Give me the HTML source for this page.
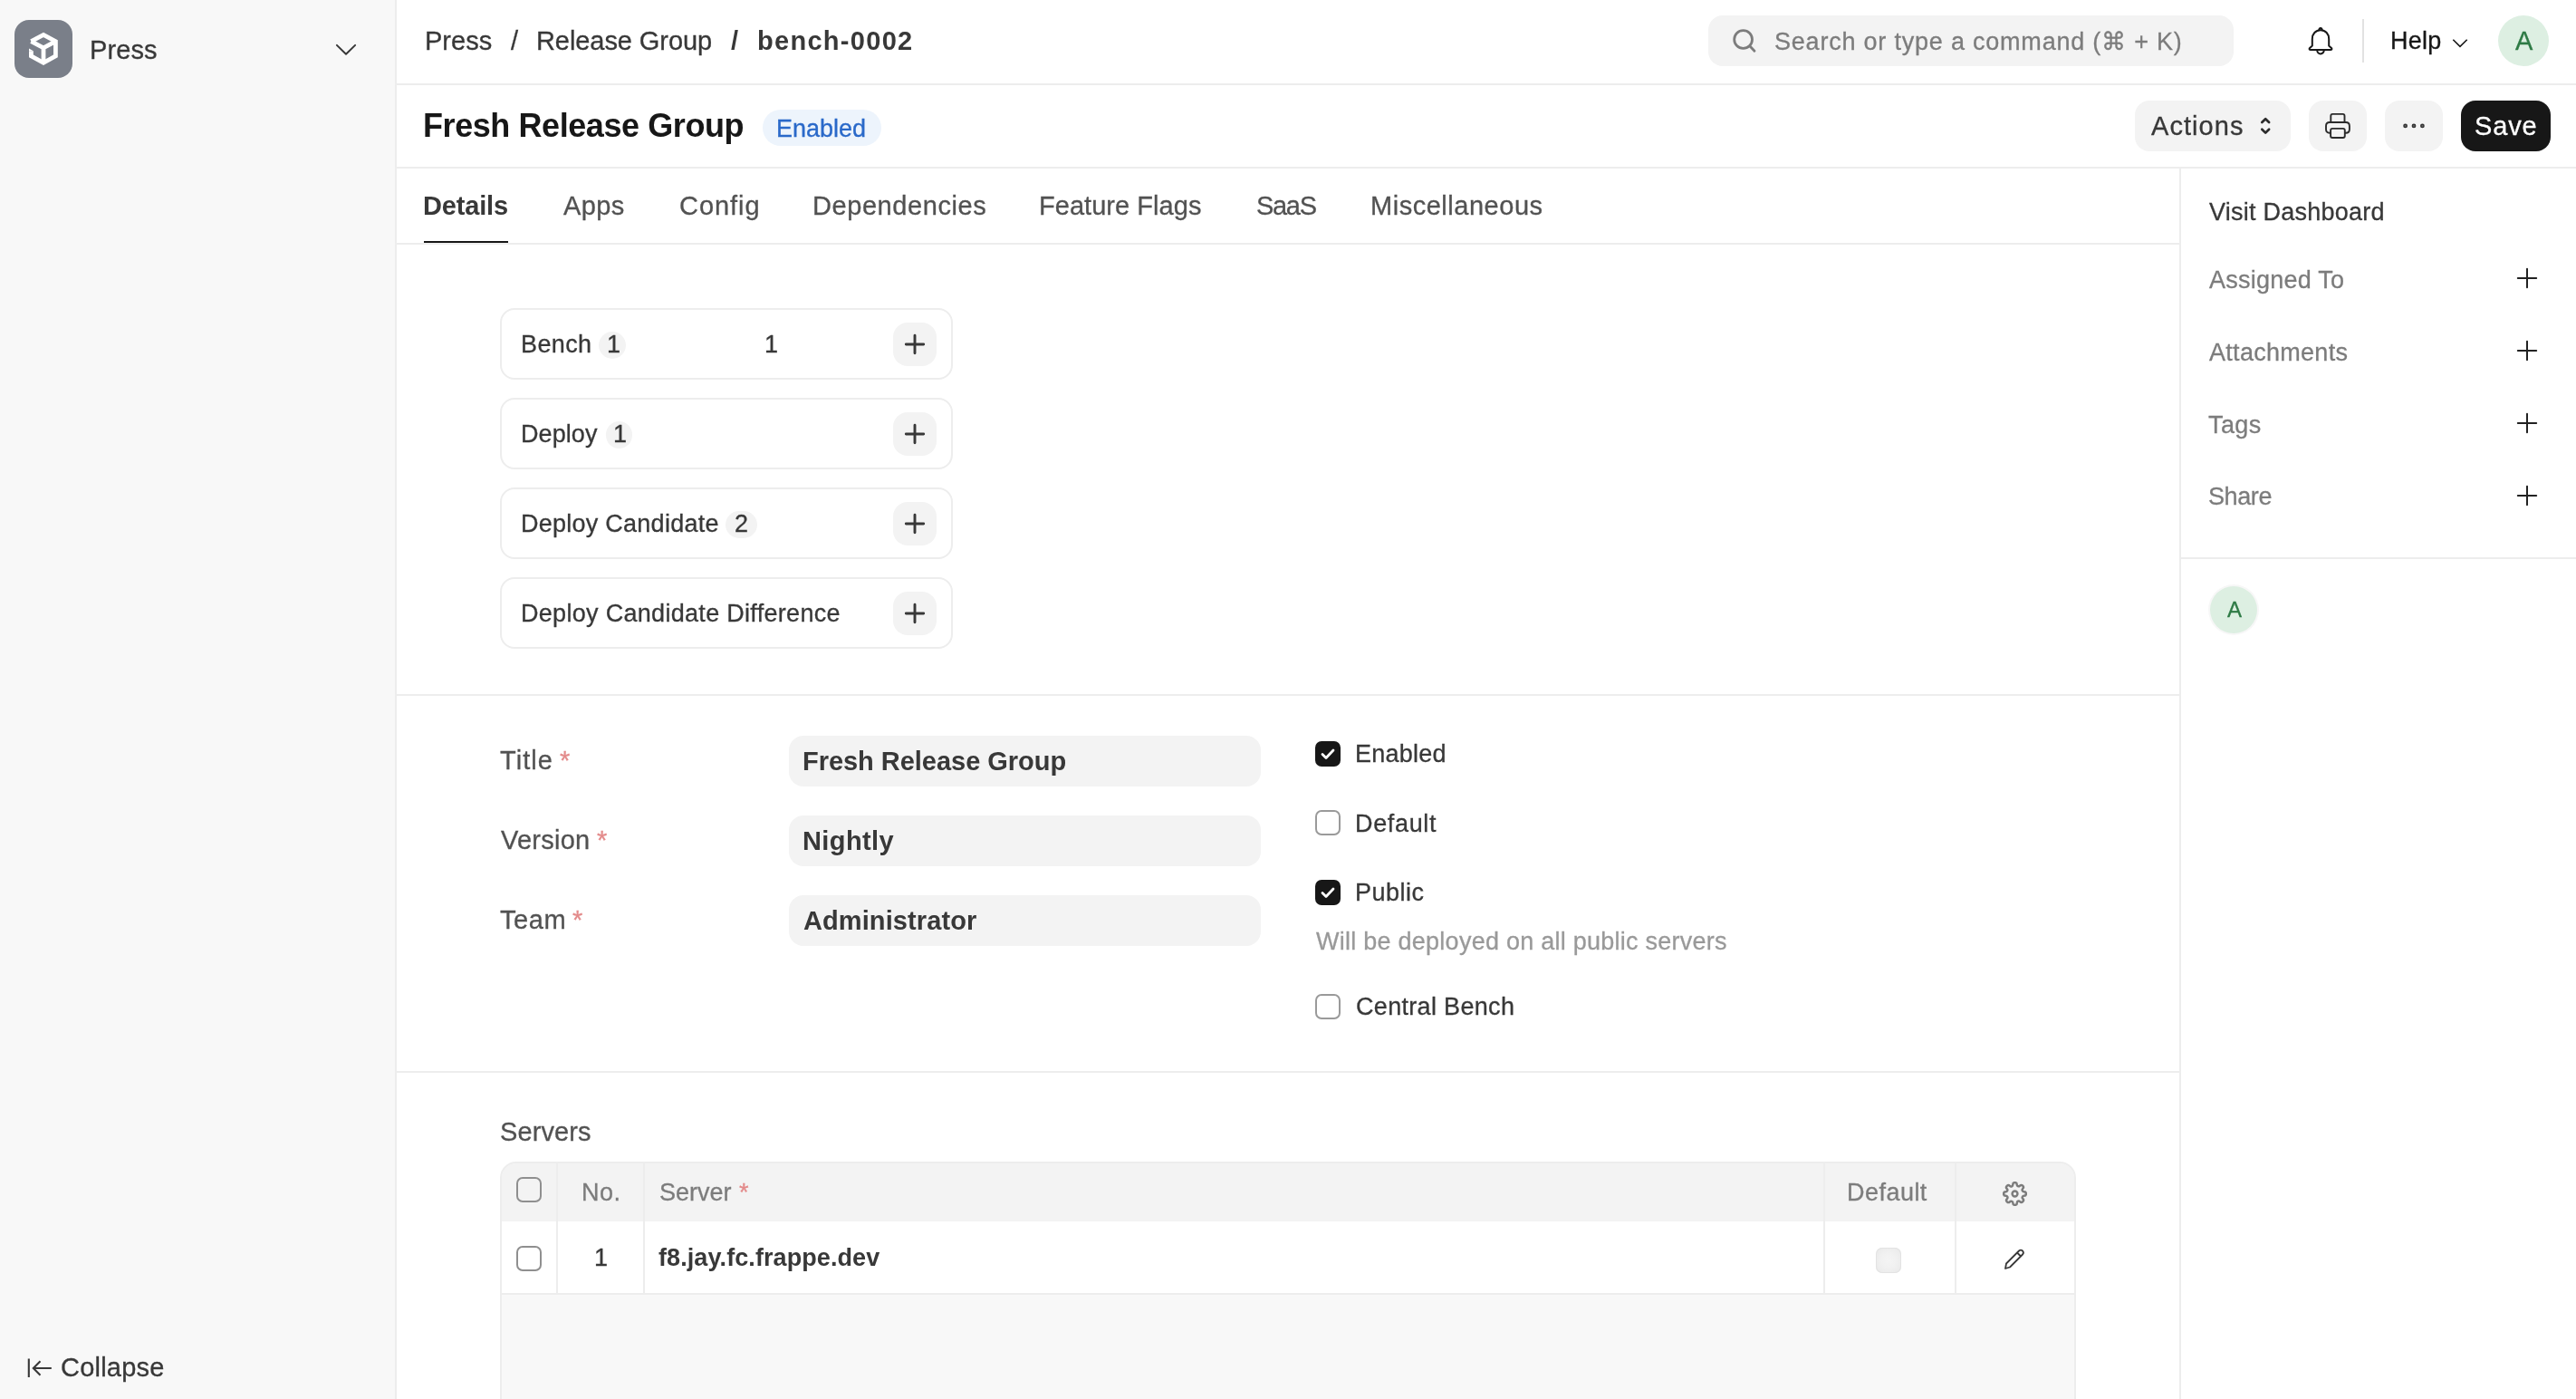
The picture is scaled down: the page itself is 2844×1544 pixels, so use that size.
<!DOCTYPE html>
<html><head><meta charset="utf-8"><title>Fresh Release Group</title>
<style>
html,body{margin:0;padding:0;}
body{width:2844px;height:1544px;position:relative;overflow:hidden;background:#fff;font-family:"Liberation Sans",sans-serif;}
.t{position:absolute;white-space:nowrap;font-family:"Liberation Sans",sans-serif;-webkit-font-smoothing:antialiased;will-change:transform;}
svg{display:block}
</style>
<script>(function(){var w=window.innerWidth||2844;if(Math.abs(w-2844)>4){document.documentElement.style.zoom=(w/2844);}})();</script>
</head><body>
<div style="position:absolute;left:0px;top:0px;width:436px;height:1544px;background:#f8f8f8"></div>
<div style="position:absolute;left:436px;top:0px;width:2px;height:1544px;background:#ededed"></div>
<svg style="position:absolute;left:16px;top:22px" width="64" height="64" viewBox="0 0 64 64"><rect width="64" height="64" rx="16" fill="#7a7f89"/>
<path d="M18.4 23.6 L32 16.4 L45.4 23.6 V39.8 L32 47.3 L18.4 39.8 V34.2" fill="none" stroke="#fff" stroke-width="4.8" stroke-linejoin="miter"/><path d="M16 31.5 L20.8 34.3 L16 34.3 Z" fill="#fff"/>
<path d="M18.4 23.6 L32 30.8 L45.4 23.6 M32 30.8 V47.3" fill="none" stroke="#fff" stroke-width="4.8" stroke-linejoin="miter"/>
</svg>
<div class="t" id="t0" style="left:99.00px;top:41px;font-size:29px;line-height:29px;color:#383838;-webkit-text-stroke:0.3px #383838;letter-spacing:0.100px;">Press</div>
<svg style="position:absolute;left:369px;top:46px" width="26" height="18" viewBox="0 0 26 18"><path d="M2.9 3.9 L13 13.7 L23.1 3.9" fill="none" stroke="#383838" stroke-width="2" stroke-linecap="round" stroke-linejoin="round"/></svg>
<svg style="position:absolute;left:28px;top:1497px" width="32" height="26" viewBox="0 0 32 26"><path d="M3.8 2.5 V23 M28.8 13 H9 M16.5 5.2 L8.8 13 L16.5 20.8" fill="none" stroke="#383838" stroke-width="2.1"/></svg>
<div class="t" id="t1" style="left:67.40px;top:1495px;font-size:29px;line-height:29px;color:#383838;-webkit-text-stroke:0.3px #383838;letter-spacing:0.229px;">Collapse</div>
<div style="position:absolute;left:438px;top:92px;width:2406px;height:2px;background:#ededed"></div>
<div class="t" id="t2" style="left:468.70px;top:31px;font-size:29px;line-height:29px;color:#383838;-webkit-text-stroke:0.3px #383838;">Press</div>
<div class="t" id="t3" style="left:564.10px;top:31px;font-size:29px;line-height:29px;color:#383838;-webkit-text-stroke:0.3px #383838;">/</div>
<div class="t" id="t4" style="left:592.40px;top:31px;font-size:29px;line-height:29px;color:#383838;-webkit-text-stroke:0.3px #383838;letter-spacing:-0.075px;">Release Group</div>
<div class="t" id="t5" style="left:806.70px;top:31px;font-size:29px;line-height:29px;color:#383838;font-weight:700;">/</div>
<div class="t" id="t6" style="left:836.20px;top:31px;font-size:29px;line-height:29px;color:#383838;font-weight:700;letter-spacing:1.289px;">bench-0002</div>
<div style="position:absolute;left:1886px;top:17px;width:580px;height:56px;background:#f3f3f3;border-radius:16px"></div>
<svg style="position:absolute;left:1910px;top:29px" width="30" height="30" viewBox="0 0 30 30"><circle cx="14.6" cy="14.5" r="9.9" fill="none" stroke="#7c7c7c" stroke-width="2.8"/><path d="M21.8 21.8 L27 27.2" stroke="#7c7c7c" stroke-width="2.8" stroke-linecap="round"/></svg>
<div class="t" id="t7" style="left:1958.60px;top:33px;font-size:27px;line-height:27px;color:#7c7c7c;-webkit-text-stroke:0.3px #7c7c7c;letter-spacing:0.787px;">Search or type a command (⌘ + K)</div>
<svg style="position:absolute;left:2546px;top:29px" width="32" height="34" viewBox="0 0 32 34"><path d="M16 4.2 C10.5 4.2 6.8 8.5 6.8 14 V21.5 L3.8 24.2 Q3 26 5 26 H27 Q29 26 28.2 24.2 L25.2 21.5 V14 C25.2 8.5 21.5 4.2 16 4.2 Z" fill="none" stroke="#171717" stroke-width="2" stroke-linejoin="round"/><path d="M12.2 26.6 A3.8 3.8 0 0 0 19.8 26.6" fill="none" stroke="#171717" stroke-width="2"/><path d="M14.2 4.4 Q14.6 2 16 2 Q17.4 2 17.8 4.4" fill="none" stroke="#171717" stroke-width="2"/></svg>
<div style="position:absolute;left:2608px;top:21px;width:2px;height:48px;background:#e2e2e2"></div>
<div class="t" id="t8" style="left:2639.40px;top:32px;font-size:27px;line-height:27px;color:#171717;-webkit-text-stroke:0.3px #171717;letter-spacing:0.267px;">Help</div>
<svg style="position:absolute;left:2706px;top:41px" width="20" height="13" viewBox="0 0 20 13"><path d="M2.3 2.8 L10 10.3 L17.7 2.8" fill="none" stroke="#171717" stroke-width="1.6"/></svg>
<div style="position:absolute;left:2758px;top:17px;width:56px;height:56px;background:#ddefe2;border-radius:50%"></div>
<div class="t" id="t9" style="left:2777.10px;top:31px;font-size:29px;line-height:29px;color:#2e7a45;-webkit-text-stroke:0.3px #2e7a45;">A</div>
<div style="position:absolute;left:438px;top:184px;width:2406px;height:2px;background:#ededed"></div>
<div class="t" id="t10" style="left:467.20px;top:121px;font-size:36px;line-height:36px;color:#171717;font-weight:700;letter-spacing:-0.422px;">Fresh Release Group</div>
<div style="position:absolute;left:842px;top:121px;width:131px;height:40px;background:#edf4fc;border-radius:20px"></div>
<div class="t" id="t11" style="left:856.90px;top:129px;font-size:27px;line-height:27px;color:#2a69c9;-webkit-text-stroke:0.3px #2a69c9;letter-spacing:-0.017px;">Enabled</div>
<div style="position:absolute;left:2357px;top:111px;width:172px;height:56px;background:#f3f3f3;border-radius:16px"></div>
<div class="t" id="t12" style="left:2374.60px;top:125px;font-size:29px;line-height:29px;color:#383838;-webkit-text-stroke:0.3px #383838;letter-spacing:1.067px;">Actions</div>
<svg style="position:absolute;left:2494px;top:127px" width="14" height="24" viewBox="0 0 14 24"><path d="M3.3 8 L7.2 4.2 L11.1 8 M3.3 15.8 L7.2 19.6 L11.1 15.8" fill="none" stroke="#2b2b2b" stroke-width="2.7" stroke-linecap="round" stroke-linejoin="round"/></svg>
<div style="position:absolute;left:2549px;top:111px;width:64px;height:56px;background:#f3f3f3;border-radius:16px"></div>
<svg style="position:absolute;left:2565px;top:123px" width="32" height="32" viewBox="0 0 32 32"><g fill="none" stroke="#2b2b2b" stroke-width="1.9"><path d="M8.3 12 V4.9 Q8.3 2.9 10.3 2.9 H21.5 Q23.5 2.9 23.5 4.9 V12"/><path d="M8.1 23.7 H7 Q3 23.7 3 19.7 V16 Q3 12 7 12 H24.9 Q28.9 12 28.9 16 V19.7 Q28.9 23.7 24.9 23.7 H23.8"/><path d="M10.1 18.9 H21.8 Q23.8 18.9 23.8 20.9 V27 Q23.8 29 21.8 29 H10.1 Q8.1 29 8.1 27 V20.9 Q8.1 18.9 10.1 18.9 Z"/></g></svg>
<div style="position:absolute;left:2633px;top:111px;width:64px;height:56px;background:#f3f3f3;border-radius:16px"></div>
<svg style="position:absolute;left:2650px;top:134px" width="30" height="10" viewBox="0 0 30 10"><g fill="#6a6a6a" stroke="#333" stroke-width="1.5"><circle cx="5.6" cy="4.9" r="1.65"/><circle cx="15" cy="4.9" r="1.65"/><circle cx="24.4" cy="4.9" r="1.65"/></g></svg>
<div style="position:absolute;left:2717px;top:111px;width:99px;height:56px;background:#171717;border-radius:16px"></div>
<div class="t" id="t13" style="left:2731.70px;top:125px;font-size:29px;line-height:29px;color:#ffffff;-webkit-text-stroke:0.3px #ffffff;letter-spacing:0.833px;">Save</div>
<div style="position:absolute;left:438px;top:268px;width:1968px;height:2px;background:#ededed"></div>
<div class="t" id="t14" style="left:466.90px;top:213px;font-size:29px;line-height:29px;color:#383838;font-weight:700;letter-spacing:-0.167px;">Details</div>
<div style="position:absolute;left:468px;top:266px;width:93px;height:2px;background:#171717"></div>
<div class="t" id="t15" style="left:621.90px;top:213px;font-size:29px;line-height:29px;color:#525252;-webkit-text-stroke:0.3px #525252;letter-spacing:0.367px;">Apps</div>
<div class="t" id="t16" style="left:749.50px;top:213px;font-size:29px;line-height:29px;color:#525252;-webkit-text-stroke:0.3px #525252;letter-spacing:0.960px;">Config</div>
<div class="t" id="t17" style="left:896.80px;top:213px;font-size:29px;line-height:29px;color:#525252;-webkit-text-stroke:0.3px #525252;letter-spacing:0.573px;">Dependencies</div>
<div class="t" id="t18" style="left:1147.00px;top:213px;font-size:29px;line-height:29px;color:#525252;-webkit-text-stroke:0.3px #525252;letter-spacing:0.042px;">Feature Flags</div>
<div class="t" id="t19" style="left:1387.00px;top:213px;font-size:29px;line-height:29px;color:#525252;-webkit-text-stroke:0.3px #525252;letter-spacing:-1.300px;">SaaS</div>
<div class="t" id="t20" style="left:1512.90px;top:213px;font-size:29px;line-height:29px;color:#525252;-webkit-text-stroke:0.3px #525252;letter-spacing:0.525px;">Miscellaneous</div>
<div style="position:absolute;left:2406px;top:186px;width:2px;height:1358px;background:#ededed"></div>
<div class="t" id="t21" style="left:2438.70px;top:221px;font-size:27px;line-height:27px;color:#383838;-webkit-text-stroke:0.3px #383838;letter-spacing:0.250px;">Visit Dashboard</div>
<div class="t" id="t22" style="left:2438.70px;top:296px;font-size:27px;line-height:27px;color:#7c7c7c;-webkit-text-stroke:0.3px #7c7c7c;letter-spacing:0.230px;">Assigned To</div>
<div class="t" id="t23" style="left:2438.70px;top:376px;font-size:27px;line-height:27px;color:#7c7c7c;-webkit-text-stroke:0.3px #7c7c7c;letter-spacing:0.290px;">Attachments</div>
<div class="t" id="t24" style="left:2437.70px;top:456px;font-size:27px;line-height:27px;color:#7c7c7c;-webkit-text-stroke:0.3px #7c7c7c;letter-spacing:0.400px;">Tags</div>
<div class="t" id="t25" style="left:2437.70px;top:535px;font-size:27px;line-height:27px;color:#7c7c7c;-webkit-text-stroke:0.3px #7c7c7c;letter-spacing:-0.400px;">Share</div>
<svg style="position:absolute;left:2778px;top:295px" width="24" height="24" viewBox="0 0 24 24"><path d="M12 1.8 V22.2 M1.8 12 H22.2" fill="none" stroke="#222" stroke-width="2" stroke-linecap="round"/></svg>
<svg style="position:absolute;left:2778px;top:375px" width="24" height="24" viewBox="0 0 24 24"><path d="M12 1.8 V22.2 M1.8 12 H22.2" fill="none" stroke="#222" stroke-width="2" stroke-linecap="round"/></svg>
<svg style="position:absolute;left:2778px;top:455px" width="24" height="24" viewBox="0 0 24 24"><path d="M12 1.8 V22.2 M1.8 12 H22.2" fill="none" stroke="#222" stroke-width="2" stroke-linecap="round"/></svg>
<svg style="position:absolute;left:2778px;top:535px" width="24" height="24" viewBox="0 0 24 24"><path d="M12 1.8 V22.2 M1.8 12 H22.2" fill="none" stroke="#222" stroke-width="2" stroke-linecap="round"/></svg>
<div style="position:absolute;left:2408px;top:615px;width:436px;height:2px;background:#ededed"></div>
<div style="position:absolute;left:2438px;top:645px;width:56px;height:56px;background:#f7f7f7;border-radius:50%"></div>
<div style="position:absolute;left:2440px;top:647px;width:52px;height:52px;background:#ddefe2;border-radius:50%"></div>
<div class="t" id="t26" style="left:2458.50px;top:661px;font-size:24px;line-height:24px;color:#2e7a45;-webkit-text-stroke:0.3px #2e7a45;">A</div>
<div style="position:absolute;left:438px;top:766px;width:1968px;height:2px;background:#ededed"></div>
<div style="position:absolute;left:552px;top:340px;width:500px;height:79px;box-sizing:border-box;border:2px solid #ededed;border-radius:16px;background:#fff"></div>
<div class="t" id="t27" style="left:575.20px;top:367px;font-size:27px;line-height:27px;color:#383838;-webkit-text-stroke:0.3px #383838;letter-spacing:0.375px;">Bench</div>
<div style="position:absolute;left:661px;top:366px;width:30px;height:30px;background:#f3f3f3;border-radius:15px"></div>
<div class="t" id="t28" style="left:669.70px;top:367px;font-size:27px;line-height:27px;color:#383838;-webkit-text-stroke:0.3px #383838;">1</div>
<div style="position:absolute;left:986px;top:356px;width:48px;height:48px;background:#f3f3f3;border-radius:16px"></div>
<svg style="position:absolute;left:996px;top:366px" width="28" height="28" viewBox="0 0 28 28"><path d="M14 4.3 V23.7 M4.3 14 H23.7" fill="none" stroke="#383838" stroke-width="2.9" stroke-linecap="round"/></svg>
<div style="position:absolute;left:552px;top:439px;width:500px;height:79px;box-sizing:border-box;border:2px solid #ededed;border-radius:16px;background:#fff"></div>
<div class="t" id="t29" style="left:575.20px;top:466px;font-size:27px;line-height:27px;color:#383838;-webkit-text-stroke:0.3px #383838;letter-spacing:0.080px;">Deploy</div>
<div style="position:absolute;left:669px;top:465px;width:29px;height:30px;background:#f3f3f3;border-radius:15px"></div>
<div class="t" id="t30" style="left:677.15px;top:466px;font-size:27px;line-height:27px;color:#383838;-webkit-text-stroke:0.3px #383838;">1</div>
<div style="position:absolute;left:986px;top:455px;width:48px;height:48px;background:#f3f3f3;border-radius:16px"></div>
<svg style="position:absolute;left:996px;top:465px" width="28" height="28" viewBox="0 0 28 28"><path d="M14 4.3 V23.7 M4.3 14 H23.7" fill="none" stroke="#383838" stroke-width="2.9" stroke-linecap="round"/></svg>
<div style="position:absolute;left:552px;top:538px;width:500px;height:79px;box-sizing:border-box;border:2px solid #ededed;border-radius:16px;background:#fff"></div>
<div class="t" id="t31" style="left:575.20px;top:565px;font-size:27px;line-height:27px;color:#383838;-webkit-text-stroke:0.3px #383838;letter-spacing:0.253px;">Deploy Candidate</div>
<div style="position:absolute;left:801px;top:564px;width:35px;height:30px;background:#f3f3f3;border-radius:15px"></div>
<div class="t" id="t32" style="left:811.05px;top:565px;font-size:27px;line-height:27px;color:#383838;-webkit-text-stroke:0.3px #383838;">2</div>
<div style="position:absolute;left:986px;top:554px;width:48px;height:48px;background:#f3f3f3;border-radius:16px"></div>
<svg style="position:absolute;left:996px;top:564px" width="28" height="28" viewBox="0 0 28 28"><path d="M14 4.3 V23.7 M4.3 14 H23.7" fill="none" stroke="#383838" stroke-width="2.9" stroke-linecap="round"/></svg>
<div style="position:absolute;left:552px;top:637px;width:500px;height:79px;box-sizing:border-box;border:2px solid #ededed;border-radius:16px;background:#fff"></div>
<div class="t" id="t33" style="left:575.20px;top:664px;font-size:27px;line-height:27px;color:#383838;-webkit-text-stroke:0.3px #383838;letter-spacing:0.300px;">Deploy Candidate Difference</div>
<div style="position:absolute;left:986px;top:653px;width:48px;height:48px;background:#f3f3f3;border-radius:16px"></div>
<svg style="position:absolute;left:996px;top:663px" width="28" height="28" viewBox="0 0 28 28"><path d="M14 4.3 V23.7 M4.3 14 H23.7" fill="none" stroke="#383838" stroke-width="2.9" stroke-linecap="round"/></svg>
<div class="t" id="t34" style="left:844.00px;top:367px;font-size:27px;line-height:27px;color:#383838;-webkit-text-stroke:0.3px #383838;">1</div>
<div style="position:absolute;left:438px;top:1182px;width:1968px;height:2px;background:#ededed"></div>
<div class="t" id="t35" style="left:552.00px;top:825px;font-size:29px;line-height:29px;color:#525252;-webkit-text-stroke:0.3px #525252;letter-spacing:1.050px;">Title</div>
<div class="t" id="t36" style="left:617.80px;top:825px;font-size:29px;line-height:29px;color:#e38b8b;-webkit-text-stroke:0.3px #e38b8b;">*</div>
<div class="t" id="t37" style="left:553.00px;top:913px;font-size:29px;line-height:29px;color:#525252;-webkit-text-stroke:0.3px #525252;letter-spacing:0.250px;">Version</div>
<div class="t" id="t38" style="left:658.60px;top:913px;font-size:29px;line-height:29px;color:#e38b8b;-webkit-text-stroke:0.3px #e38b8b;">*</div>
<div class="t" id="t39" style="left:552.00px;top:1001px;font-size:29px;line-height:29px;color:#525252;-webkit-text-stroke:0.3px #525252;letter-spacing:0.567px;">Team</div>
<div class="t" id="t40" style="left:631.80px;top:1001px;font-size:29px;line-height:29px;color:#e38b8b;-webkit-text-stroke:0.3px #e38b8b;">*</div>
<div style="position:absolute;left:871px;top:812px;width:521px;height:56px;background:#f3f3f3;border-radius:16px"></div>
<div class="t" id="t41" style="left:886.00px;top:826px;font-size:29px;line-height:29px;color:#383838;font-weight:700;letter-spacing:-0.033px;">Fresh Release Group</div>
<div style="position:absolute;left:871px;top:900px;width:521px;height:56px;background:#f3f3f3;border-radius:16px"></div>
<div class="t" id="t42" style="left:886.00px;top:914px;font-size:29px;line-height:29px;color:#383838;font-weight:700;letter-spacing:0.400px;">Nightly</div>
<div style="position:absolute;left:871px;top:988px;width:521px;height:56px;background:#f3f3f3;border-radius:16px"></div>
<div class="t" id="t43" style="left:887.00px;top:1002px;font-size:29px;line-height:29px;color:#383838;font-weight:700;letter-spacing:0.092px;">Administrator</div>
<div style="position:absolute;left:1452px;top:818px;width:28px;height:28px;background:#171717;border-radius:7px"></div>
<svg style="position:absolute;left:1452px;top:818px" width="28" height="28" viewBox="0 0 28 28"><path d="M8 14.5 L12 18.5 L20 10" fill="none" stroke="#fff" stroke-width="2.8" stroke-linecap="round" stroke-linejoin="round"/></svg>
<div class="t" id="t44" style="left:1495.50px;top:819px;font-size:27px;line-height:27px;color:#383838;-webkit-text-stroke:0.3px #383838;letter-spacing:0.250px;">Enabled</div>
<div style="position:absolute;left:1452px;top:894px;width:28px;height:28px;box-sizing:border-box;border:2px solid #9a9a9a;border-radius:7px;background:#fff"></div>
<div class="t" id="t45" style="left:1495.50px;top:896px;font-size:27px;line-height:27px;color:#383838;-webkit-text-stroke:0.3px #383838;letter-spacing:0.650px;">Default</div>
<div style="position:absolute;left:1452px;top:971px;width:28px;height:28px;background:#171717;border-radius:7px"></div>
<svg style="position:absolute;left:1452px;top:971px" width="28" height="28" viewBox="0 0 28 28"><path d="M8 14.5 L12 18.5 L20 10" fill="none" stroke="#fff" stroke-width="2.8" stroke-linecap="round" stroke-linejoin="round"/></svg>
<div class="t" id="t46" style="left:1495.50px;top:972px;font-size:27px;line-height:27px;color:#383838;-webkit-text-stroke:0.3px #383838;letter-spacing:0.500px;">Public</div>
<div style="position:absolute;left:1452px;top:1097px;width:28px;height:28px;box-sizing:border-box;border:2px solid #9a9a9a;border-radius:7px;background:#fff"></div>
<div class="t" id="t47" style="left:1496.50px;top:1098px;font-size:27px;line-height:27px;color:#383838;-webkit-text-stroke:0.3px #383838;letter-spacing:0.317px;">Central Bench</div>
<div class="t" id="t48" style="left:1452.80px;top:1026px;font-size:27px;line-height:27px;color:#999999;-webkit-text-stroke:0.3px #999999;letter-spacing:0.254px;">Will be deployed on all public servers</div>
<div class="t" id="t49" style="left:552.30px;top:1235px;font-size:29px;line-height:29px;color:#525252;-webkit-text-stroke:0.3px #525252;letter-spacing:0.100px;">Servers</div>
<div style="position:absolute;left:552px;top:1282px;width:1740px;height:300px;box-sizing:border-box;border:2px solid #ededed;border-radius:18px 18px 0 0;background:#f8f8f8;overflow:hidden">
<div style="position:absolute;left:0;top:0;right:0;height:64px;background:#f3f3f3"></div>
<div style="position:absolute;left:0;top:64px;right:0;height:79px;background:#fff;border-bottom:2px solid #ededed"></div>
<div style="position:absolute;left:60px;top:0;width:2px;height:143px;background:#ededed"></div>
<div style="position:absolute;left:156px;top:0;width:2px;height:143px;background:#ededed"></div>
<div style="position:absolute;left:1459px;top:0;width:2px;height:143px;background:#ededed"></div>
<div style="position:absolute;left:1604px;top:0;width:2px;height:143px;background:#ededed"></div>
</div>
<div style="position:absolute;left:570px;top:1299px;width:28px;height:28px;box-sizing:border-box;border:2px solid #8f8f8f;border-radius:7px"></div>
<div style="position:absolute;left:570px;top:1375px;width:28px;height:28px;box-sizing:border-box;border:2px solid #8f8f8f;border-radius:7px;background:#fff"></div>
<div class="t" id="t50" style="left:642.00px;top:1303px;font-size:27px;line-height:27px;color:#7c7c7c;-webkit-text-stroke:0.3px #7c7c7c;letter-spacing:0.500px;">No.</div>
<div class="t" id="t51" style="left:728.10px;top:1303px;font-size:27px;line-height:27px;color:#7c7c7c;-webkit-text-stroke:0.3px #7c7c7c;letter-spacing:-0.020px;">Server</div>
<div class="t" id="t52" style="left:815.80px;top:1303px;font-size:27px;line-height:27px;color:#e38b8b;-webkit-text-stroke:0.3px #e38b8b;">*</div>
<div class="t" id="t53" style="left:2039.40px;top:1303px;font-size:27px;line-height:27px;color:#7c7c7c;-webkit-text-stroke:0.3px #7c7c7c;letter-spacing:0.467px;">Default</div>
<div class="t" id="t54" style="left:656.00px;top:1375px;font-size:27px;line-height:27px;color:#383838;-webkit-text-stroke:0.3px #383838;">1</div>
<div class="t" id="t55" style="left:727.40px;top:1375px;font-size:27px;line-height:27px;color:#383838;font-weight:700;letter-spacing:0.084px;">f8.jay.fc.frappe.dev</div>
<div style="position:absolute;left:2071px;top:1377px;width:28px;height:28px;background:radial-gradient(circle at 50% 50%,#f4f4f4 0,#f1f1f1 40%,#e8e8e8 100%);box-shadow:inset 0 0 0 1px #e3e3e3;border-radius:7px"></div>
<svg style="position:absolute;left:2210.5px;top:1304.4px" width="27" height="27" viewBox="0 0 24 24"><path d="M12 14.6a2.6 2.6 0 1 0 0-5.2 2.6 2.6 0 0 0 0 5.2Z" fill="none" stroke="#7c7c7c" stroke-width="2.2"/><path d="M19.4 15a1.65 1.65 0 0 0 .33 1.82l.06.06a2 2 0 0 1-2.83 2.83l-.06-.06a1.65 1.65 0 0 0-1.82-.33 1.65 1.65 0 0 0-1 1.51V21a2 2 0 0 1-4 0v-.09A1.65 1.65 0 0 0 9 19.4a1.65 1.65 0 0 0-1.82.33l-.06.06a2 2 0 0 1-2.83-2.83l.06-.06A1.65 1.65 0 0 0 4.68 15a1.65 1.65 0 0 0-1.51-1H3a2 2 0 0 1 0-4h.09A1.65 1.65 0 0 0 4.6 9a1.65 1.65 0 0 0-.33-1.82l-.06-.06a2 2 0 0 1 2.83-2.83l.06.06A1.65 1.65 0 0 0 9 4.68a1.65 1.65 0 0 0 1-1.51V3a2 2 0 0 1 4 0v.09a1.65 1.65 0 0 0 1 1.51 1.65 1.65 0 0 0 1.82-.33l.06-.06a2 2 0 0 1 2.83 2.83l-.06.06A1.65 1.65 0 0 0 19.4 9a1.65 1.65 0 0 0 1.51 1H21a2 2 0 0 1 0 4h-.09a1.65 1.65 0 0 0-1.51 1Z" fill="none" stroke="#7c7c7c" stroke-width="2.2"/></svg>
<svg style="position:absolute;left:2210px;top:1377px" width="28" height="26" viewBox="0 0 28 26"><path d="M4 23 L5 17.5 L19 3.5 Q21 1.8 23 3.5 Q24.8 5.5 23 7.5 L9 21.5 Z M17 5.5 L21 9.5" fill="none" stroke="#383838" stroke-width="1.8" stroke-linejoin="round"/></svg>
</body></html>
